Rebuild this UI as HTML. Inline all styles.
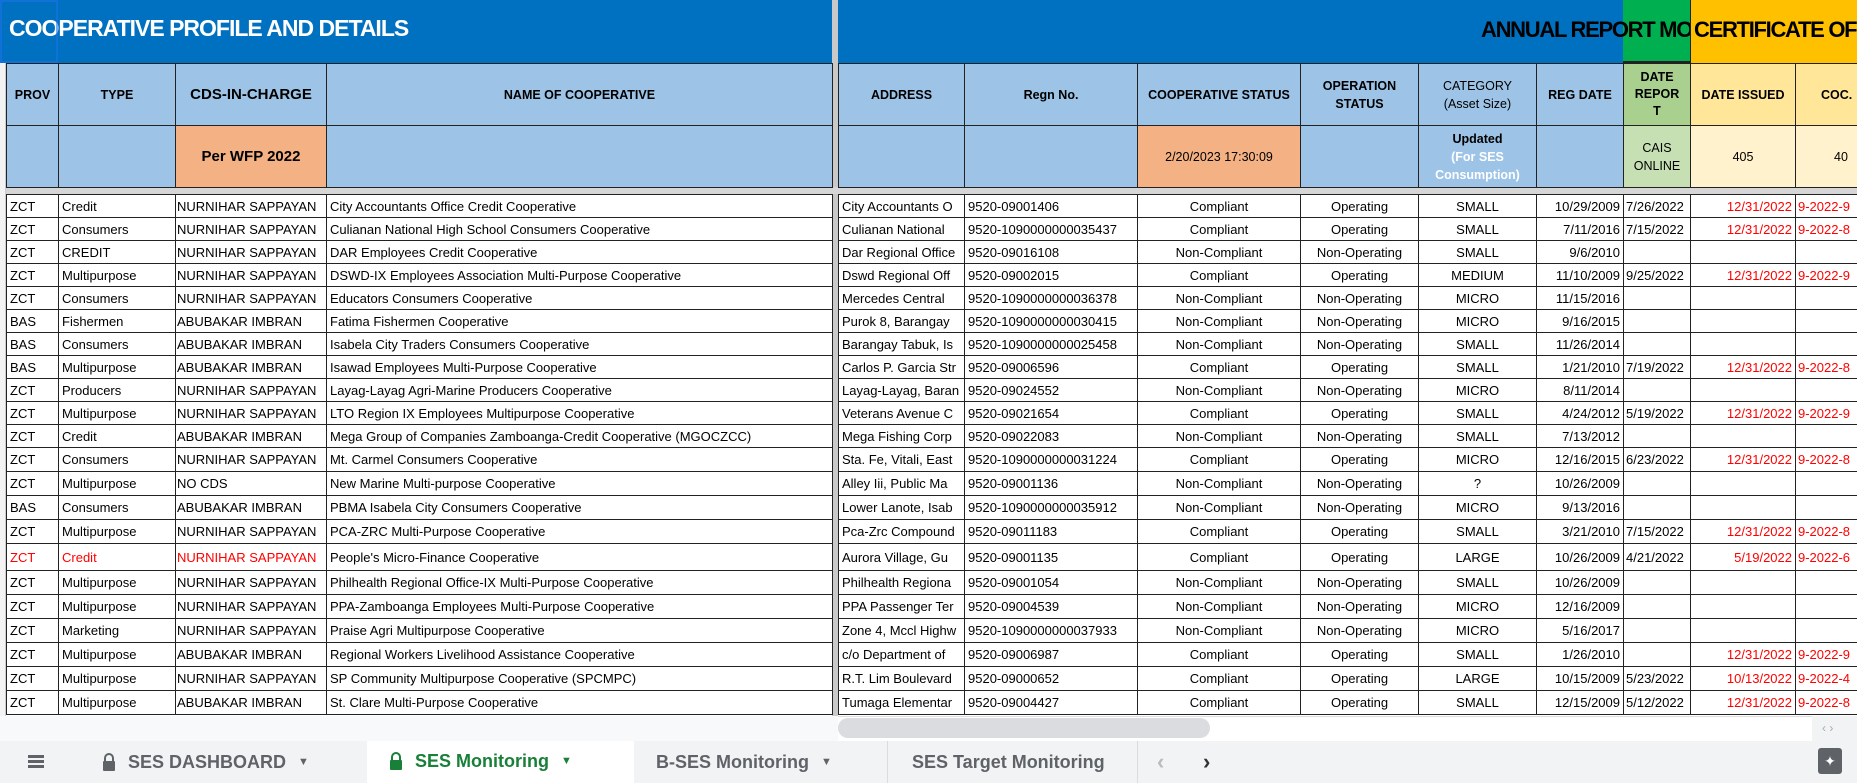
<!DOCTYPE html>
<html><head><meta charset="utf-8">
<style>
*{margin:0;padding:0;box-sizing:border-box}
body{width:1857px;height:783px;overflow:hidden;background:#fff;font-family:"Liberation Sans",Arial,sans-serif;position:relative}
table{border-collapse:collapse;table-layout:fixed;position:absolute}
td{border:1px solid #222;overflow:hidden;white-space:nowrap;font-size:13px;padding:0 3px;color:#000}
.h td{background:#9DC3E6;font-weight:bold;text-align:center;font-size:12.5px;white-space:normal;line-height:18px}
.c{text-align:center}.r{text-align:right}.red{color:#f00}
.title{position:absolute;top:0;height:63px;background:#0070C0}
.tab{position:absolute;top:741px;height:42px;font-size:18px;color:#5f6368;font-weight:bold;display:flex;align-items:center}
</style></head><body>
<div class="title" style="left:0;width:832px"></div>
<div class="title" style="left:838px;width:785px"></div>
<div style="position:absolute;left:1623px;top:0;width:67px;height:63px;background:#00B050;border-bottom:2px solid #222"></div>
<div style="position:absolute;left:1690px;top:0;width:167px;height:63px;background:#FFC000;border-left:1px solid #222"></div>
<div style="position:absolute;left:9px;top:15px;color:#fff;font-weight:bold;font-size:23px;letter-spacing:-1px">COOPERATIVE PROFILE AND DETAILS</div>
<div style="position:absolute;left:1481px;top:17px;width:209px;overflow:hidden;white-space:nowrap;color:#000;font-weight:bold;font-size:22px;letter-spacing:-1.3px">ANNUAL REPORT MONITORING</div>
<div style="position:absolute;left:1694px;top:17px;white-space:nowrap;color:#000;font-weight:bold;font-size:22px;letter-spacing:-1.3px">CERTIFICATE OF</div>
<div style="position:absolute;left:0;top:0;width:58px;height:63px;border:2px solid #1a73e8;opacity:.6"></div>
<div style="position:absolute;left:832px;top:0;width:6px;height:716px;background:#c9c9c9"></div>
<div style="position:absolute;left:0;top:187px;width:1857px;height:7px;background:#d6d6d6"></div>
<div style="position:absolute;left:0;top:63px;width:6px;height:653px;background:#f3f3f3;border-right:1px solid #ccc"></div>

<table class="h" style="left:6px;top:63px;width:826px">
<colgroup><col style="width:52px"><col style="width:117px"><col style="width:151px"><col style="width:506px"></colgroup>
<tr style="height:62px"><td>PROV</td><td>TYPE</td><td style="font-size:15px;font-weight:bold">CDS-IN-CHARGE</td><td>NAME OF COOPERATIVE</td></tr>
<tr style="height:62px"><td></td><td></td><td style="background:#F4B183;font-size:15px">Per WFP 2022</td><td></td></tr>
</table>
<table class="h" style="left:838px;top:63px;width:1124px">
<colgroup><col style="width:126px"><col style="width:173px"><col style="width:163px"><col style="width:118px"><col style="width:118px"><col style="width:87px"><col style="width:67px"><col style="width:105px"><col style="width:167px"></colgroup>
<tr style="height:62px"><td>ADDRESS</td><td>Regn No.</td><td>COOPERATIVE STATUS</td><td>OPERATION STATUS</td><td style="font-weight:normal">CATEGORY<br>(Asset Size)</td><td>REG DATE</td><td style="background:#A9D08E;line-height:17px;padding:0 8px">DATE REPOR T</td><td style="background:#FFE699">DATE ISSUED</td><td style="background:#FFE699;text-align:left;padding-left:25px">COC.</td></tr>
<tr style="height:62px"><td></td><td></td><td style="background:#F4B183;font-weight:normal">2/20/2023 17:30:09</td><td></td><td>Updated<br><span style="color:#fff">(For SES Consumption)</span></td><td></td><td style="background:#C6E0B4;font-weight:normal">CAIS ONLINE</td><td style="background:#FFF2CC;font-weight:normal">405</td><td style="background:#FFF2CC;font-weight:normal;text-align:left;padding-left:38px">40</td></tr>
</table>

<table id="L" style="left:6px;top:194px;width:826px">
<colgroup><col style="width:52px"><col style="width:117px"><col style="width:151px"><col style="width:506px"></colgroup>
</table>
<table id="R" style="left:838px;top:194px;width:1124px">
<colgroup><col style="width:126px"><col style="width:173px"><col style="width:163px"><col style="width:118px"><col style="width:118px"><col style="width:87px"><col style="width:67px"><col style="width:105px"><col style="width:167px"></colgroup>
</table>
<script>
var N="NURNIHAR SAPPAYAN",A="ABUBAKAR IMBRAN",C="Compliant",NC="Non-Compliant",O="Operating",NO="Non-Operating",D="12/31/2022";
var rows=[
["ZCT","Credit",N,"City Accountants Office Credit Cooperative","City Accountants O","9520-09001406",C,O,"SMALL","10/29/2009","7/26/2022",D,"9-2022-9"],
["ZCT","Consumers",N,"Culianan National High School Consumers Cooperative","Culianan National","9520-1090000000035437",C,O,"SMALL","7/11/2016","7/15/2022",D,"9-2022-8"],
["ZCT","CREDIT",N,"DAR Employees Credit Cooperative","Dar Regional Office","9520-09016108",NC,NO,"SMALL","9/6/2010","","",""],
["ZCT","Multipurpose",N,"DSWD-IX Employees Association Multi-Purpose Cooperative","Dswd Regional Off","9520-09002015",C,O,"MEDIUM","11/10/2009","9/25/2022",D,"9-2022-9"],
["ZCT","Consumers",N,"Educators Consumers Cooperative","Mercedes Central","9520-1090000000036378",NC,NO,"MICRO","11/15/2016","","",""],
["BAS","Fishermen",A,"Fatima Fishermen Cooperative","Purok 8, Barangay","9520-1090000000030415",NC,NO,"MICRO","9/16/2015","","",""],
["BAS","Consumers",A,"Isabela City Traders Consumers Cooperative","Barangay Tabuk, Is","9520-1090000000025458",NC,NO,"SMALL","11/26/2014","","",""],
["BAS","Multipurpose",A,"Isawad Employees Multi-Purpose Cooperative","Carlos P. Garcia Str","9520-09006596",C,O,"SMALL","1/21/2010","7/19/2022",D,"9-2022-8"],
["ZCT","Producers",N,"Layag-Layag Agri-Marine Producers Cooperative","Layag-Layag, Baran","9520-09024552",NC,NO,"MICRO","8/11/2014","","",""],
["ZCT","Multipurpose",N,"LTO Region IX Employees Multipurpose Cooperative","Veterans Avenue C","9520-09021654",C,O,"SMALL","4/24/2012","5/19/2022",D,"9-2022-9"],
["ZCT","Credit",A,"Mega Group of Companies Zamboanga-Credit Cooperative (MGOCZCC)","Mega Fishing Corp","9520-09022083",NC,NO,"SMALL","7/13/2012","","",""],
["ZCT","Consumers",N,"Mt. Carmel Consumers Cooperative","Sta. Fe, Vitali, East","9520-1090000000031224",C,O,"MICRO","12/16/2015","6/23/2022",D,"9-2022-8"],
["ZCT","Multipurpose","NO CDS","New Marine Multi-purpose Cooperative","Alley Iii, Public Ma","9520-09001136",NC,NO,"?","10/26/2009","","",""],
["BAS","Consumers",A,"PBMA Isabela City Consumers Cooperative","Lower Lanote, Isab","9520-1090000000035912",NC,NO,"MICRO","9/13/2016","","",""],
["ZCT","Multipurpose",N,"PCA-ZRC Multi-Purpose Cooperative","Pca-Zrc Compound","9520-09011183",C,O,"SMALL","3/21/2010","7/15/2022",D,"9-2022-8"],
["ZCT","Credit",N,"People's Micro-Finance Cooperative","Aurora Village, Gu","9520-09001135",C,O,"LARGE","10/26/2009","4/21/2022","5/19/2022","9-2022-6"],
["ZCT","Multipurpose",N,"Philhealth Regional Office-IX Multi-Purpose Cooperative","Philhealth Regiona","9520-09001054",NC,NO,"SMALL","10/26/2009","","",""],
["ZCT","Multipurpose",N,"PPA-Zamboanga Employees Multi-Purpose Cooperative","PPA Passenger Ter","9520-09004539",NC,NO,"MICRO","12/16/2009","","",""],
["ZCT","Marketing",N,"Praise Agri Multipurpose Cooperative","Zone 4, Mccl Highw","9520-1090000000037933",NC,NO,"MICRO","5/16/2017","","",""],
["ZCT","Multipurpose",A,"Regional Workers Livelihood Assistance Cooperative","c/o Department of","9520-09006987",C,O,"SMALL","1/26/2010","",D,"9-2022-9"],
["ZCT","Multipurpose",N,"SP Community Multipurpose Cooperative (SPCMPC)","R.T. Lim Boulevard","9520-09000652",C,O,"LARGE","10/15/2009","5/23/2022","10/13/2022","9-2022-4"],
["ZCT","Multipurpose",A,"St. Clare Multi-Purpose Cooperative","Tumaga Elementar","9520-09004427",C,O,"SMALL","12/15/2009","5/12/2022",D,"9-2022-8"]];
var hs=[23,23,23,23,23,23,23,23,23,23,23,24,24,24,24,27,24,24,24,24,24,24];
var L=document.getElementById("L"),R=document.getElementById("R");
rows.forEach(function(r,i){
 var red=i==15?' class="red"':'';
 var tl=document.createElement("tr");tl.style.height=hs[i]+"px";
 tl.innerHTML="<td"+red+">"+r[0]+"</td><td"+red+">"+r[1]+"</td><td"+red+" style='padding:0 1px'>"+r[2]+"</td><td>"+r[3]+"</td>";
 L.appendChild(tl);
 var tr=document.createElement("tr");tr.style.height=hs[i]+"px";
 tr.innerHTML="<td>"+r[4]+"</td><td>"+r[5]+"</td><td class='c'>"+r[6]+"</td><td class='c'>"+r[7]+"</td><td class='c'>"+r[8]+"</td><td class='r'>"+r[9]+"</td><td style='padding:0 2px'>"+r[10]+"</td><td class='r red'>"+r[11]+"</td><td class='red' style='padding:0 2px'>"+r[12]+"</td>";
 R.appendChild(tr);
});
</script>
<div style="position:absolute;left:0;top:716px;width:1857px;height:25px;background:#fff;border-top:1px solid #ddd"></div>
<div style="position:absolute;left:0;top:716px;width:838px;height:25px;background:#f8f9fa"></div>
<div style="position:absolute;left:838px;top:718px;width:372px;height:20px;background:#dadce0;border-radius:10px"></div>
<div style="position:absolute;left:1812px;top:716px;width:45px;height:25px;background:#f1f3f4;color:#aaa;font-size:12px;padding:5px 0 0 10px">‹ ›</div>
<div style="position:absolute;left:0;top:741px;width:1857px;height:42px;background:#f1f3f4"></div>
<div style="position:absolute;left:1137px;top:741px;width:720px;height:42px;background:#f1f3f4;border-left:1px solid #dadce0"></div>
<div style="position:absolute;left:28px;top:755px;width:16px;height:13px;border-top:3px solid #5f6368;border-bottom:3px solid #5f6368"><div style="margin-top:2px;height:3px;background:#5f6368"></div></div>
<div class="tab" style="left:80px;width:282px;padding-left:22px"><svg width="14" height="18" viewBox="0 0 14 18" style="margin-right:12px"><path d="M3 8V5a4 4 0 0 1 8 0v3" fill="none" stroke="#5f6368" stroke-width="2"/><rect x="1" y="8" width="12" height="10" rx="1" fill="#5f6368"/></svg>SES DASHBOARD<span style="font-size:11px;margin-left:12px">▼</span></div>
<div class="tab" style="left:367px;width:267px;background:#fff;color:#188038;padding-left:22px;border-bottom:2px solid #fff"><svg width="14" height="18" viewBox="0 0 14 18" style="margin-right:12px"><path d="M3 8V5a4 4 0 0 1 8 0v3" fill="none" stroke="#188038" stroke-width="2"/><rect x="1" y="8" width="12" height="10" rx="1" fill="#188038"/></svg>SES Monitoring<span style="font-size:11px;margin-left:12px">▼</span></div>
<div class="tab" style="left:634px;width:254px;padding-left:22px;border-right:1px solid #dadce0">B-SES Monitoring<span style="font-size:11px;margin-left:12px">▼</span></div>
<div class="tab" style="left:888px;width:249px;padding-left:24px;overflow:hidden;white-space:nowrap">SES Target Monitoring</div>
<div class="tab" style="left:1157px;color:#bbb;font-size:22px">‹</div>
<div class="tab" style="left:1203px;color:#333;font-size:22px">›</div>
<div style="position:absolute;left:1818px;top:748px;width:24px;height:26px;background:#5f6368;border-radius:3px;color:#fff;text-align:center;font-size:14px;line-height:26px">✦</div>
</body></html>
